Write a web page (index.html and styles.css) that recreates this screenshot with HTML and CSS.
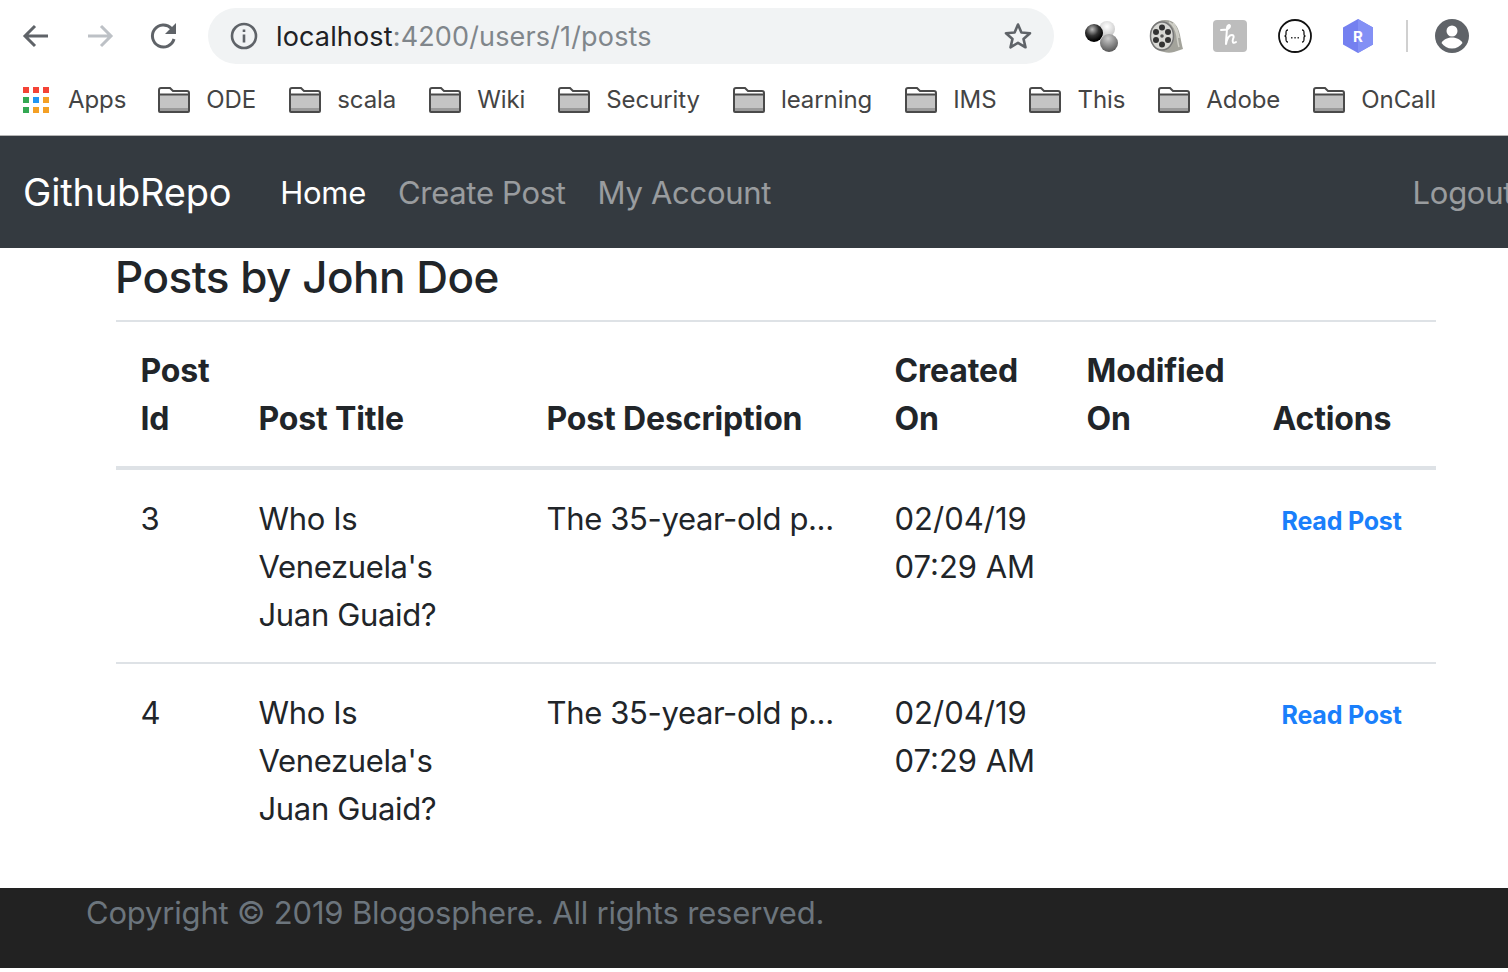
FILE: index.html
```html
<!DOCTYPE html>
<html lang="en">
<head>
    <meta charset="UTF-8" />
    <title>GithubRepo</title>
    <link rel="stylesheet" href="styles.css">
</head>
<body>

<div class="toolbar">
    <svg class="tool-icon" viewBox="0 0 32 32"><path d="M28 16H6M15 6L5 16l10 10" fill="none" stroke="#5f6368" stroke-width="3"/></svg>
    <svg class="tool-icon" viewBox="0 0 32 32"><path d="M4 16h22M17 6l10 10-10 10" fill="none" stroke="#bdc1c6" stroke-width="3"/></svg>
    <svg class="tool-icon" viewBox="0 0 32 32"><path d="M26 19a11 11 0 1 1-2.5-10.500" fill="none" stroke="#5f6368" stroke-width="3"/><path d="M28 3v11H17z" fill="#5f6368"/></svg>
    <div class="omnibox">
        <svg class="info-icon" viewBox="0 0 28 28"><circle cx="14" cy="14" r="12" fill="none" stroke="#5f6368" stroke-width="2.600"/><path d="M12.700 12.500h2.600v8h-2.600zM12.700 7.500h2.600v2.600h-2.600z" fill="#5f6368"/></svg>
        <span class="url"><span class="url-host">localhost</span>:4200/users/1/posts</span>
        <svg class="star-icon" viewBox="0 0 30 30"><path d="M15 3.500l3.400 8 8.600.7-6.500 5.700 2 8.400-7.500-4.500-7.500 4.500 2-8.400L3 12.200l8.600-.7z" fill="none" stroke="#5f6368" stroke-width="2.600" stroke-linejoin="round"/></svg>
    </div>
    <div class="extensions">
        <svg class="ext" viewBox="0 0 34 34">
            <defs>
                <radialGradient id="ball-black" cx="40%" cy="30%" r="65%"><stop offset="0" stop-color="#bbb"/><stop offset=".55" stop-color="#333"/><stop offset="1" stop-color="#000"/></radialGradient>
                <radialGradient id="ball-white" cx="50%" cy="35%" r="65%"><stop offset="0" stop-color="#fff"/><stop offset="1" stop-color="#c4c4c4"/></radialGradient>
                <radialGradient id="ball-grey" cx="45%" cy="25%" r="75%"><stop offset="0" stop-color="#ccc"/><stop offset="1" stop-color="#555"/></radialGradient>
            </defs>
            <circle cx="22" cy="10" r="8" fill="url(#ball-white)"/>
            <circle cx="9" cy="14" r="9" fill="url(#ball-black)"/>
            <circle cx="24" cy="24" r="9" fill="url(#ball-grey)"/>
        </svg>
        <svg class="ext" viewBox="0 0 34 34">
            <path d="M16 1c9 0 13 6 15 15 1 5 2 11 3 14l-9 3c-3 1-7 1-10 0C6 32 1 25 1 16 1 8 7 1 16 1z" fill="#a3a39b"/>
            <path d="M20 3c5 3 7 8 8 14 .5 4 1 8 2 11M24 4c4 4 5 9 6 15" fill="none" stroke="#d0d0c8" stroke-width="1.500"/>
            <ellipse cx="13" cy="17" rx="11.500" ry="14" fill="#d8d8d4" stroke="#777" stroke-width="1.500"/>
            <circle cx="13" cy="8.500" r="3" fill="#333"/><circle cx="13" cy="25.500" r="3" fill="#333"/>
            <circle cx="7" cy="13" r="3" fill="#333"/><circle cx="19" cy="13" r="3" fill="#333"/>
            <circle cx="7" cy="21" r="3" fill="#333"/><circle cx="19" cy="21" r="3" fill="#333"/>
            <circle cx="13" cy="17" r="1.800" fill="#555"/>
        </svg>
        <svg class="ext" viewBox="0 0 34 34">
            <rect width="34" height="32" y="1" rx="4" fill="#bdbdbd"/>
            <path d="M8 11c4 0 9-1 9-4 0-2-3-1-3 2 0 4-1 9-1 16 1-5 3-9 6-9 2 0 2 2 1 4-1 3 0 5 3 3" fill="none" stroke="#fff" stroke-width="2" stroke-linecap="round" stroke-linejoin="round"/>
        </svg>
        <svg class="ext ext-json" viewBox="0 0 36 36">
            <circle cx="18" cy="18" r="16" fill="#fff" stroke="#111" stroke-width="1.800"/>
            <path d="M11 12c-2 0-2 1-2 3v1.500c0 1-.5 1.500-1.500 1.500 1 0 1.500.5 1.500 1.500V21c0 2 0 3 2 3M25 12c2 0 2 1 2 3v1.500c0 1 .5 1.500 1.500 1.500-1 0-1.500.5-1.500 1.500V21c0 2 0 3-2 3" fill="none" stroke="#111" stroke-width="1.300"/>
            <path d="M14 19h1.500v1.500H14zM17.300 19h1.500v1.500h-1.500zM20.500 19H22v1.500h-1.500z" fill="#333"/>
        </svg>
        <svg class="ext" viewBox="0 0 34 34">
            <path d="M17 0l15 8.500v17L17 34 2 25.500v-17z" fill="#7480f0"/>
            <path d="M17 0l15 8.500v17L17 34z" fill="#8390f5"/>
            <text x="17" y="22.500" class="ext-letter">R</text>
        </svg>
        <span class="divider"></span>
        <svg class="avatar" viewBox="0 0 36 36">
            <circle cx="18" cy="18" r="17" fill="#5f6368"/>
            <circle cx="18" cy="13" r="5.500" fill="#fff"/>
            <path d="M7.500 25c2-4 7-5.500 10.500-5.500S26.500 21 28.500 25c-2.500 3.500-6 5.500-10.500 5.500S10 28.500 7.500 25z" fill="#fff"/>
        </svg>
    </div>
</div>

<div class="bookmarks">
    <a class="bookmark bookmark-apps">
        <svg class="apps-icon" viewBox="0 0 26 26">
            <rect x="0" y="0" width="6" height="6" fill="#f44336"/><rect x="10" y="0" width="6" height="6" fill="#f44336"/><rect x="20" y="0" width="6" height="6" fill="#f44336"/>
            <rect x="0" y="10" width="6" height="6" fill="#34a853"/><rect x="10" y="10" width="6" height="6" fill="#2196f3"/><rect x="20" y="10" width="6" height="6" fill="#f4a025"/>
            <rect x="0" y="20" width="6" height="6" fill="#34a853"/><rect x="10" y="20" width="6" height="6" fill="#f4a025"/><rect x="20" y="20" width="6" height="6" fill="#f4a025"/>
        </svg>
        Apps
    </a>
    <a class="bookmark"><svg class="folder" viewBox="0 0 32 26"><use href="#folder-shape"/></svg>ODE</a>
    <a class="bookmark"><svg class="folder" viewBox="0 0 32 26"><use href="#folder-shape"/></svg>scala</a>
    <a class="bookmark"><svg class="folder" viewBox="0 0 32 26"><use href="#folder-shape"/></svg>Wiki</a>
    <a class="bookmark"><svg class="folder" viewBox="0 0 32 26"><use href="#folder-shape"/></svg>Security</a>
    <a class="bookmark"><svg class="folder" viewBox="0 0 32 26"><use href="#folder-shape"/></svg>learning</a>
    <a class="bookmark"><svg class="folder" viewBox="0 0 32 26"><use href="#folder-shape"/></svg>IMS</a>
    <a class="bookmark"><svg class="folder" viewBox="0 0 32 26"><use href="#folder-shape"/></svg>This</a>
    <a class="bookmark"><svg class="folder" viewBox="0 0 32 26"><use href="#folder-shape"/></svg>Adobe</a>
    <a class="bookmark"><svg class="folder" viewBox="0 0 32 26"><use href="#folder-shape"/></svg>OnCall</a>
</div>

<svg class="sprite">
    <symbol id="folder-shape" viewBox="0 0 32 26">
        <path d="M1 24V2h11l3 3h16v19.500z" fill="#fff"/>
        <path d="M2 8h28v16H2z" fill="#c4c4c4"/>
        <path d="M2 21h28v3H2z" fill="#9a9a9a"/>
        <path d="M1 24V3q0-2 2-2h9l3 3h14q2 0 2 2v18q0 1-1 1H2q-1 0-1-1zM1 7.500h30" fill="none" stroke="#4a4a4a" stroke-width="2"/>
    </symbol>
</svg>

<nav class="navbar">
    <a class="brand">GithubRepo</a>
    <a class="nav-link active">Home</a>
    <a class="nav-link">Create Post</a>
    <a class="nav-link">My Account</a>
    <a class="nav-link logout">Logout</a>
</nav>

<main class="content">
    <h2 class="title">Posts by John Doe</h2>
    <table class="posts">
        <thead>
            <tr>
                <th class="col-id">Post Id</th>
                <th class="col-title">Post Title</th>
                <th class="col-desc">Post Description</th>
                <th class="col-created">Created On</th>
                <th class="col-modified">Modified On</th>
                <th>Actions</th>
            </tr>
        </thead>
        <tbody>
            <tr>
                <td>3</td>
                <td class="cell-text">Who Is Venezuela's Juan Guaid?</td>
                <td class="cell-text">The 35-year-old p...</td>
                <td>02/04/19 07:29 AM</td>
                <td></td>
                <td><a class="read-link">Read Post</a></td>
            </tr>
            <tr>
                <td>4</td>
                <td class="cell-text">Who Is Venezuela's Juan Guaid?</td>
                <td class="cell-text">The 35-year-old p...</td>
                <td>02/04/19 07:29 AM</td>
                <td></td>
                <td><a class="read-link">Read Post</a></td>
            </tr>
        </tbody>
    </table>
</main>

<footer class="footer">
    Copyright © 2019 Blogosphere. All rights reserved.
</footer>

</body>
</html>
```

FILE: styles.css
```css
html, body { margin: 0; height: 972px; overflow: hidden; }
body { font-family: Inter, 'Noto Sans', sans-serif; background: #fff; color: #212529; }

.toolbar { display: flex; align-items: center; height: 72px; padding-left: 20px; }
.tool-icon { width: 32px; height: 32px; margin-right: 32px; flex: none; }
.tool-icon:nth-child(3) { margin-right: 28px; }
.omnibox {
    display: flex; align-items: center; width: 846px; height: 56px; box-sizing: border-box;
    padding: 0 21px 0 22px; background: #f1f3f4; border-radius: 28px;
}
.info-icon { width: 28px; height: 28px; flex: none; margin-right: 18px; }
.url { font-size: 27px; letter-spacing: .15px; color: #80868b; flex: 1; white-space: nowrap; }
.url-host { color: #202124; }
.star-icon { width: 30px; height: 30px; flex: none; }
.extensions { display: flex; align-items: center; margin-left: 31px; }
.ext { width: 34px; height: 34px; margin-right: 30px; flex: none; }
.ext-json { width: 36px; height: 36px; margin-right: 28px; }
.ext-letter { font-size: 15px; font-weight: 700; fill: #fff; text-anchor: middle; }
.divider { width: 2px; height: 32px; background: #d0d0d0; margin: 0 26px 0 1px; }
.avatar { width: 36px; height: 36px; flex: none; }

.bookmarks { display: flex; align-items: center; height: 64px; padding: 0 0 8px 23px; box-sizing: border-box; border-bottom: 1px solid #b5b5b5; }
.bookmark { display: flex; align-items: center; font-size: 24px; letter-spacing: -.08px; color: #444; margin-right: 33px; white-space: nowrap; }
.bookmark-apps { margin-right: 32px; }
.apps-icon { width: 26px; height: 26px; margin-right: 19px; }
.folder { width: 32px; height: 26px; margin-right: 16px; flex: none; }
.sprite { display: none; }

.navbar { display: flex; align-items: center; height: 112px; background: #343a40; padding-left: 23px; overflow: hidden; white-space: nowrap; }
.brand { font-size: 38px; letter-spacing: -.2px; color: #fff; margin-right: 49px; }
.nav-link { font-size: 31px; letter-spacing: -.3px; color: rgba(255,255,255,.5); margin-right: 32px; }
.nav-link.active { color: #fff; }
.logout { margin-left: auto; margin-right: -5px; }

.content { padding: 0 72px 0 116px; }
.title { font-size: 44px; font-weight: 500; margin: 0 0 0 -1px; line-height: 58px; height: 72px; letter-spacing: -.5px; }
.posts { width: 1320px; border-collapse: collapse; table-layout: fixed; font-size: 31px; line-height: 48px; }
.posts th, .posts td { padding: 25px 15.5px 23px 24.5px; text-align: left; vertical-align: top; border-top: 2px solid #dee2e6; }
.posts th { vertical-align: bottom; font-size: 32px; letter-spacing: -.15px; font-weight: 700; border-bottom: 4px solid #dee2e6; }
.posts tbody tr:first-child td { border-top: 0; }
.posts .cell-text { letter-spacing: -.35px; }
.col-id { width: 78px; }
.col-title { width: 248px; }
.col-desc { width: 308px; }
.col-created { width: 152px; }
.col-modified { width: 146px; }
.read-link { display: inline-block; padding: 2px 0 0 9px; font-size: 25px; letter-spacing: -.2px; font-weight: 700; color: #1a7ffb; white-space: nowrap; }

.footer { margin-top: 32px; height: 80px; background: #222; color: #6c757d; font-size: 31px; letter-spacing: -.18px; line-height: 50px; padding-left: 86px; box-sizing: border-box; }
```
